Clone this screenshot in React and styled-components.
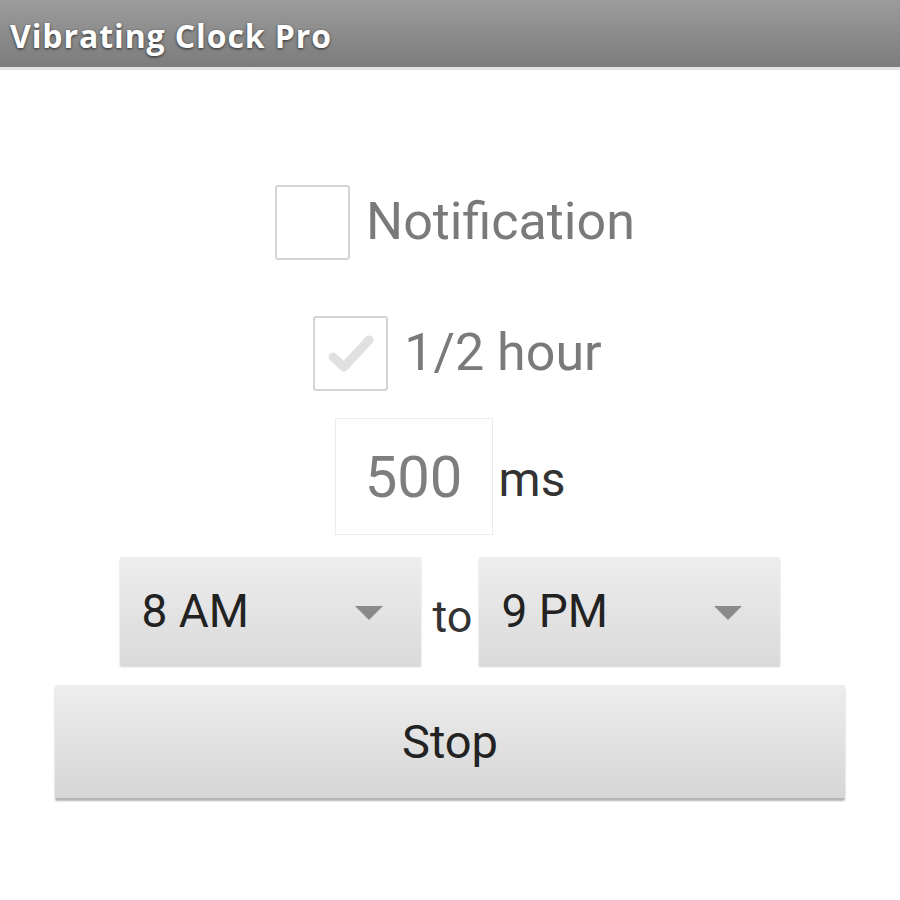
import styled, { createGlobalStyle } from 'styled-components'

const Global = createGlobalStyle`
  body {
    margin: 0;
    background: #fff;
    font-family: Roboto, "Noto Sans", sans-serif;
  }
`

const Page = styled.div`
  width: 900px;
  height: 900px;
  background: #fff;
  display: flex;
  flex-direction: column;
`

const TitleBar = styled.div`
  height: 67px;
  background: linear-gradient(#9c9c9c, #7c7c7c);
  border-bottom: 3px solid #e4e4e4;
  display: flex;
  align-items: center;
  padding-left: 10px;
`

const Title = styled.h1`
  margin: 0;
  font-family: "Open Sans", Roboto, sans-serif;
  font-weight: 700;
  font-size: 32px;
  letter-spacing: 0.9px;
  color: #fff;
  text-shadow: 0 1px 3px rgba(0, 0, 0, 0.7);
  margin-top: 4px;
`

const Content = styled.div`
  display: flex;
  flex-direction: column;
  align-items: center;
  padding-top: 115px;
`

const CheckRow = styled.label`
  display: flex;
  align-items: center;
  gap: 16px;
  height: 74px;
  margin-bottom: ${p => p.$mb || 0}px;
  margin-left: ${p => p.$ml || 0}px;
`

const Box = styled.div`
  width: 71px;
  height: 71px;
  border: 2px solid #d4d4d4;
  border-radius: 3px;
  display: flex;
  align-items: center;
  justify-content: center;
`

const Label = styled.span`
  font-size: 52px;
  color: #7a7a7a;
  line-height: 1;
`

const MsRow = styled.div`
  display: flex;
  align-items: center;
  gap: 6px;
  margin-top: 28px;
`

const Field = styled.div`
  width: 158px;
  height: 117px;
  border: 1px solid #ececec;
  display: flex;
  align-items: center;
  justify-content: center;
  font-size: 58px;
  color: #7e7e7e;
  box-sizing: border-box;
`

const Unit = styled.span`
  font-size: 48px;
  color: #333;
  margin-top: 6px;
`

const SpinRow = styled.div`
  display: flex;
  align-items: center;
  margin-top: 22px;
`

const Spinner = styled.div`
  width: 301px;
  height: 108px;
  box-sizing: border-box;
  background: linear-gradient(#ededed, #dadada);
  box-shadow: 0 2px 2px rgba(0, 0, 0, 0.18);
  display: flex;
  align-items: center;
  justify-content: space-between;
  padding: 0 38px 0 22px;
  font-size: 46px;
  color: #222;
`

const Arrow = styled.span`
  width: 0;
  height: 0;
  border-left: 14px solid transparent;
  border-right: 14px solid transparent;
  border-top: 14px solid #8a8a8a;
  margin-top: 4px;
`

const To = styled.span`
  font-size: 45px;
  color: #333;
  margin: 10px 7px 0 12px;
`

const StopButton = styled.button`
  margin-top: 20px;
  width: 790px;
  height: 113px;
  border: none;
  border-radius: 2px;
  background: linear-gradient(#ededed, #d6d6d6);
  box-shadow: 0 3px 2px rgba(0, 0, 0, 0.3);
  font-family: Roboto, "Noto Sans", sans-serif;
  font-size: 47px;
  color: #222;
`

const Check = () => (
  <svg width="52" height="52" viewBox="0 0 52 52">
    <path d="M8 30 L19 40 L44 13" fill="none" stroke="#e0e0e0" strokeWidth="9" strokeLinecap="round" strokeLinejoin="round" />
  </svg>
)

export default function App() {
  return (
    <Page>
      <Global />
      <TitleBar>
        <Title>Vibrating Clock Pro</Title>
      </TitleBar>
      <Content>
        <CheckRow $mb={57} $ml={10}>
          <Box />
          <Label>Notification</Label>
        </CheckRow>
        <CheckRow $ml={15}>
          <Box><Check /></Box>
          <Label>1/2 hour</Label>
        </CheckRow>
        <MsRow>
          <Field>500</Field>
          <Unit>ms</Unit>
        </MsRow>
        <SpinRow>
          <Spinner>8 AM<Arrow /></Spinner>
          <To>to</To>
          <Spinner>9 PM<Arrow /></Spinner>
        </SpinRow>
        <StopButton>Stop</StopButton>
      </Content>
    </Page>
  )
}
